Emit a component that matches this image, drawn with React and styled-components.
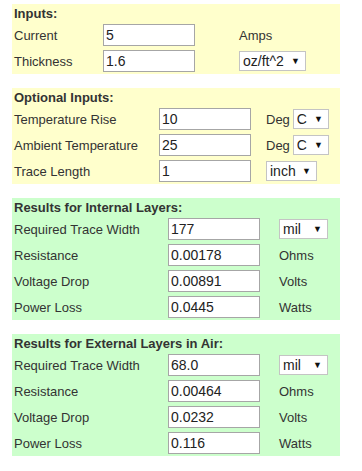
import React from "react";
import styled, { createGlobalStyle } from "styled-components";

const GlobalStyle = createGlobalStyle`
  body {
    margin: 0;
    background: #ffffff;
    font-family: "Liberation Sans", Arial, sans-serif;
    color: #333333;
  }
`;

const Page = styled.div`
  width: 328px;
  padding: 4px 0 0 12px;
  display: flex;
  flex-direction: column;
  gap: 14px;
`;

const Panel = styled.div`
  background: ${(p) => (p.$tone === "green" ? "#ccffcc" : "#ffffcc")};
  padding: 0 0 2px 2px;
  display: grid;
  grid-template-columns: ${(p) => p.$cols};
  grid-template-rows: 16px;
  grid-auto-rows: 22px;
  row-gap: 4px;
  align-items: center;
`;

const Title = styled.div`
  grid-column: 1 / -1;
  align-self: start;
  height: 20px;
  line-height: 20px;
  font-size: 13px;
  font-weight: bold;
  color: #333333;
`;

const Label = styled.div`
  font-size: 13px;
  color: #333333;
  white-space: nowrap;
`;

const Input = styled.input`
  display: block;
  box-sizing: border-box;
  width: 92px;
  height: 22px;
  border: 1px solid #a6a6a6;
  background: #ffffff;
  padding: 0 2px;
  font-family: "Liberation Sans", Arial, sans-serif;
  font-size: 14px;
  color: #222222;
  outline: none;
`;

const Unit = styled.div`
  display: flex;
  align-items: center;
  gap: 3px;
  font-size: 13px;
  color: #333333;
  white-space: nowrap;
`;

const SelectBox = styled.div`
  box-sizing: border-box;
  width: ${(p) => p.$w}px;
  height: 20px;
  border: 1px solid #c4c4c4;
  background: #ffffff;
  display: flex;
  align-items: center;
  justify-content: space-between;
  padding: 0 5px 0 3px;
  font-size: 14px;
  color: #222222;
`;

const Arrow = styled.span`
  font-size: 9px;
  color: #111111;
  line-height: 1;
`;

const Select = ({ value, w }) => (
  <SelectBox $w={w}>
    <span>{value}</span>
    <Arrow>▼</Arrow>
  </SelectBox>
);

const Row = ({ label, value, unit }) => (
  <>
    <Label>{label}</Label>
    <div>
      <Input defaultValue={value} />
    </div>
    <Unit>{unit}</Unit>
  </>
);

const resultCols = "154px 111px 1fr";

const Results = ({ title, width, resistance, drop, loss }) => (
  <Panel $tone="green" $cols={resultCols}>
    <Title>{title}</Title>
    <Row label="Required Trace Width" value={width} unit={<Select value="mil" w={49} />} />
    <Row label="Resistance" value={resistance} unit="Ohms" />
    <Row label="Voltage Drop" value={drop} unit="Volts" />
    <Row label="Power Loss" value={loss} unit="Watts" />
  </Panel>
);

export default function App() {
  return (
    <>
      <GlobalStyle />
      <Page>
        <Panel $cols="89px 136px 1fr">
          <Title>Inputs:</Title>
          <Row label="Current" value="5" unit="Amps" />
          <Row label="Thickness" value="1.6" unit={<Select value="oz/ft^2" w={67} />} />
        </Panel>
        <Panel $cols="145px 107px 1fr">
          <Title>Optional Inputs:</Title>
          <Row
            label="Temperature Rise"
            value="10"
            unit={<>Deg <Select value="C" w={36} /></>}
          />
          <Row
            label="Ambient Temperature"
            value="25"
            unit={<>Deg <Select value="C" w={36} /></>}
          />
          <Row label="Trace Length" value="1" unit={<Select value="inch" w={51} />} />
        </Panel>
        <Results
          title="Results for Internal Layers:"
          width="177"
          resistance="0.00178"
          drop="0.00891"
          loss="0.0445"
        />
        <Results
          title="Results for External Layers in Air:"
          width="68.0"
          resistance="0.00464"
          drop="0.0232"
          loss="0.116"
        />
      </Page>
    </>
  );
}
